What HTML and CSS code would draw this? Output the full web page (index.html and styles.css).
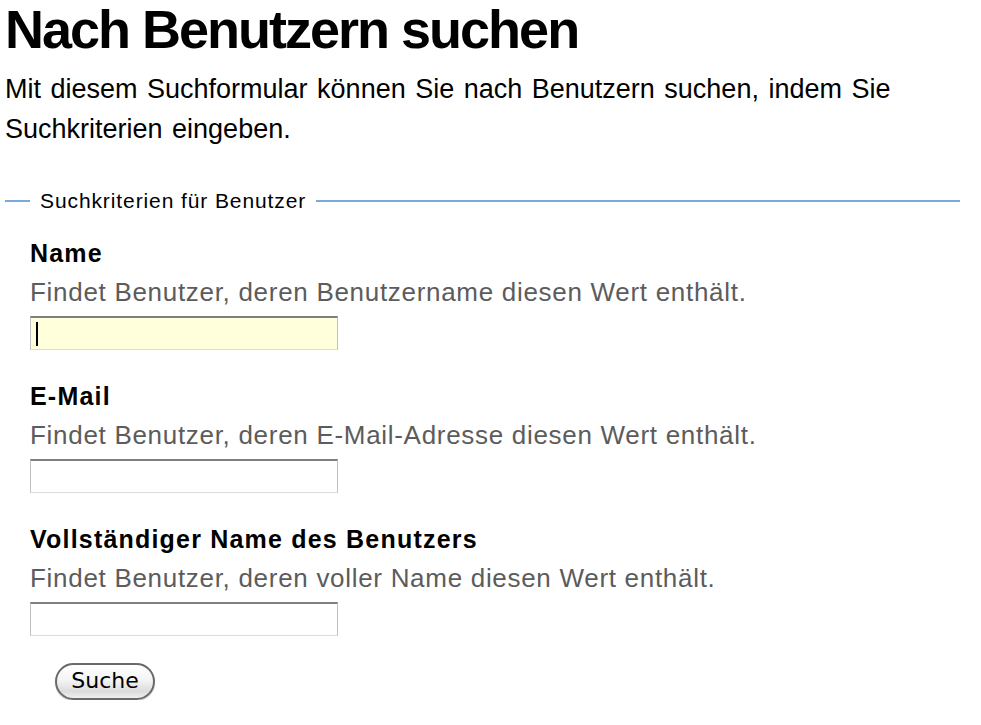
FILE: index.html
```html
<!DOCTYPE html>
<html lang="de">
<head>
<meta charset="utf-8">
<title>Nach Benutzern suchen</title>
<link rel="stylesheet" href="styles.css">
</head>
<body>
<h1 class="title">Nach Benutzern suchen</h1>
<p class="intro">Mit diesem Suchformular können Sie nach Benutzern suchen, indem Sie Suchkriterien eingeben.</p>
<form class="search-form">
  <fieldset class="criteria">
    <legend class="criteria-legend">Suchkriterien für Benutzer</legend>
    <div class="field">
      <label class="field-label" for="name">Name</label>
      <div class="field-help">Findet Benutzer, deren Benutzername diesen Wert enthält.</div>
      <span class="input-wrap">
        <input class="text-input focused" id="name" type="text">
        <span class="caret"></span>
      </span>
    </div>
    <div class="field">
      <label class="field-label" for="email">E-Mail</label>
      <div class="field-help">Findet Benutzer, deren E-Mail-Adresse diesen Wert enthält.</div>
      <span class="input-wrap">
        <input class="text-input" id="email" type="text">
      </span>
    </div>
    <div class="field">
      <label class="field-label" for="fullname">Vollständiger Name des Benutzers</label>
      <div class="field-help">Findet Benutzer, deren voller Name diesen Wert enthält.</div>
      <span class="input-wrap">
        <input class="text-input" id="fullname" type="text">
      </span>
    </div>
    <div class="actions">
      <button class="search-button" type="button">Suche</button>
    </div>
  </fieldset>
</form>
</body>
</html>
```

FILE: styles.css
```css
html, body {
  margin: 0;
  padding: 0;
  background: #ffffff;
}

body {
  padding: 0 5px;
  font-family: "Liberation Sans", Arial, Helvetica, sans-serif;
  color: #000000;
}

.title {
  margin: 0;
  font-size: 54px;
  line-height: 58px;
  font-weight: bold;
  letter-spacing: -2px;
}

.intro {
  margin: 11px 0 0 0;
  font-size: 27px;
  line-height: 40px;
  word-spacing: 2px;
}

.search-form {
  margin: 40px 16px 0 0;
}

.criteria {
  margin: 0;
  padding: 21px 0 0 25px;
  border: none;
  border-top: 2px solid #7aaadc;
  min-width: 0;
}

.criteria-legend {
  padding: 0 10px;
  font-size: 21px;
  line-height: 24px;
  letter-spacing: 0.9px;
}

.field {
  display: flex;
  flex-direction: column;
  align-items: flex-start;
  margin-bottom: 27px;
}

.field-label {
  font-size: 25px;
  line-height: 38px;
  font-weight: bold;
  letter-spacing: 1.2px;
}

.field-help {
  font-size: 26px;
  line-height: 40px;
  letter-spacing: 0.7px;
  color: #5c5c5c;
}

.input-wrap {
  position: relative;
  display: block;
  margin-top: 4px;
}

.text-input {
  display: block;
  box-sizing: border-box;
  width: 308px;
  height: 34px;
  margin: 0;
  padding: 0;
  border-style: solid;
  border-width: 2px 1px 1px 1px;
  border-color: #7f7f7f #c0c0c0 #dcdcdc #c0c0c0;
  background: #ffffff;
  outline: none;
}

.text-input.focused {
  background: #ffffdc;
}

.caret {
  position: absolute;
  left: 6px;
  top: 6px;
  width: 2px;
  height: 24px;
  background: #000000;
}

.actions {
  padding-left: 25px;
  margin-top: 0;
}

.search-button {
  box-sizing: border-box;
  width: 100px;
  height: 37px;
  padding: 0 0 2px 0;
  border: 2px solid #6a6a6a;
  border-radius: 19px;
  background: linear-gradient(#ffffff 0%, #f4f4f4 45%, #dcdcdc 80%, #f0f0f0 100%);
  box-shadow: 0 1px 1px rgba(0, 0, 0, 0.25);
  font-family: "DejaVu Sans", "Lucida Grande", sans-serif;
  font-size: 22px;
  color: #000000;
}
```
